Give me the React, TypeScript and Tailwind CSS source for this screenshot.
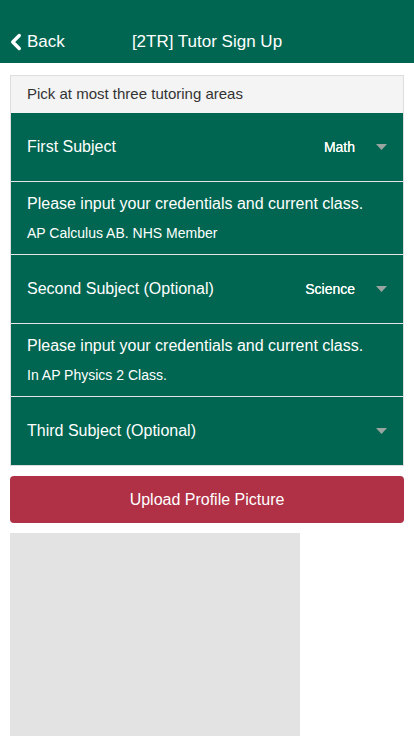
import { ChevronLeft } from 'lucide-react'

interface Subject {
  label: string
  value: string
  credentials?: string
}

const subjects: Subject[] = [
  { label: 'First Subject', value: 'Math', credentials: 'AP Calculus AB. NHS Member' },
  { label: 'Second Subject (Optional)', value: 'Science', credentials: 'In AP Physics 2 Class.' },
  { label: 'Third Subject (Optional)', value: '' },
]

function Caret() {
  return (
    <svg width="11" height="6" viewBox="0 0 11 6" className="ml-[21px] shrink-0">
      <path d="M0 0h11L5.5 6z" fill="#9aa5a1" />
    </svg>
  )
}

export default function App() {
  return (
    <div className="min-h-[736px] bg-white font-['Liberation_Sans',Arial,sans-serif]">
      <header className="relative h-[63px] bg-[#006651] pt-[20px] text-white">
        <div className="flex h-[43px] items-center justify-center text-[17px]">
          <button className="absolute left-[3px] top-[29px] flex items-center">
            <ChevronLeft size={26} strokeWidth={3.2} />
            <span className="-ml-[2px]">Back</span>
          </button>
          <span>[2TR] Tutor Sign Up</span>
        </div>
      </header>

      <main className="px-[10px] pt-[12px]">
        <div className="border border-[#dddddd]">
          <div className="flex h-[37px] items-center bg-[#f4f4f4] px-[16px] text-[15px] text-[#333333]">
            Pick at most three tutoring areas
          </div>
          {subjects.map((s, i) => (
            <div key={s.label}>
              <div
                className={`flex items-center justify-between bg-[#006651] pl-[16px] pr-[16px] text-white ${
                  i > 0 ? 'h-[69px] border-t border-[#e5e5e5]' : 'h-[68px]'
                }`}
              >
                <span className="text-[16px]">{s.label}</span>
                <span className="flex items-center">
                  <span className="text-[14px] [text-shadow:0_0_0.4px_#fff]">{s.value}</span>
                  <Caret />
                </span>
              </div>
              {s.credentials && (
                <div className="flex h-[73px] flex-col border-t border-[#e5e5e5] bg-[#006651] px-[16px] pt-[12px] text-white">
                  <span className="text-[16px] leading-[20px]">
                    Please input your credentials and current class.
                  </span>
                  <span className="mt-[10px] text-[14px] leading-[18px]">{s.credentials}</span>
                </div>
              )}
            </div>
          ))}
        </div>

        <button className="mt-[10px] flex h-[47px] w-full items-center justify-center rounded-[4px] bg-[#b03046] text-[16px] text-white">
          Upload Profile Picture
        </button>

        <div className="mt-[10px] h-[210px] w-[290px] bg-[#e3e3e3]" />
      </main>
    </div>
  )
}
